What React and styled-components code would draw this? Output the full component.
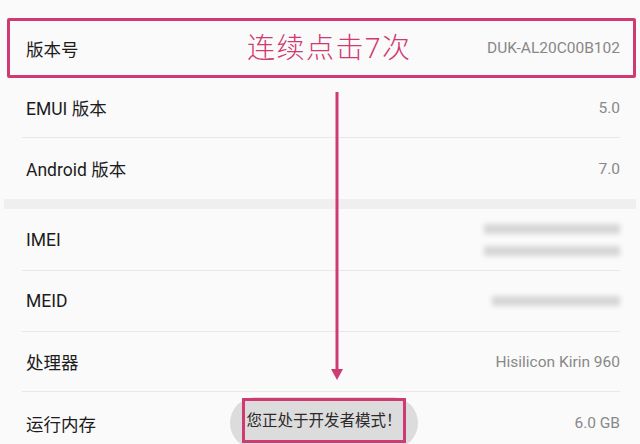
import React from 'react';
import styled, { createGlobalStyle } from 'styled-components';

const GlobalStyle = createGlobalStyle`
  html, body {
    margin: 0;
    padding: 0;
    background: #fafafa;
    font-family: Roboto, "Noto Sans CJK SC", sans-serif;
  }
  *, *:before, *:after {
    box-sizing: border-box;
  }
`

const pink = '#cf3a72'

const Screen = styled.div`
  position: relative;
  width: 640px;
  height: 444px;
  overflow: hidden;
  background: #fafafa;
  padding-top: 18px;
`

const Section = styled.div`
  display: flex;
  flex-direction: column;
`

const SectionGap = styled.div`
  height: 10px;
  background: #efefef;
  margin: 0 4px;
`

const HighlightRow = styled.div`
  position: relative;
  display: flex;
  align-items: center;
  justify-content: space-between;
  height: 60px;
  margin: 0 4px 0 7px;
  padding: 0 13px 0 16px;
  border: 3px solid ${pink};
  border-radius: 2px;
`

const Row = styled.div`
  display: flex;
  align-items: center;
  justify-content: space-between;
  height: ${p => p.$h || 61}px;
  margin: 0 20px 0 22px;
  padding-left: 4px;
  border-bottom: ${p => (p.$last ? 'none' : '1px solid #e8e8e8')};
`

const Label = styled.span`
  font-size: 17.5px;
  color: #1c1c1c;
`

const Value = styled.span`
  font-size: 15.5px;
  color: #888888;
`

const Hint = styled.span`
  position: absolute;
  left: 237px;
  top: 50%;
  transform: translateY(-54%);
  font-size: 28px;
  font-weight: 300;
  color: ${pink};
  letter-spacing: 1.5px;
`

const Blurred = styled.div`
  display: flex;
  flex-direction: column;
  align-items: flex-end;
  gap: 12px;
`

const BlurBar = styled.div`
  width: ${p => p.$w}px;
  height: 10px;
  background: #d6d6d6;
  filter: blur(2.5px);
`

const Arrow = styled.svg`
  position: absolute;
  left: 330px;
  top: 92px;
`

const Toast = styled.div`
  position: absolute;
  left: 230px;
  top: 397px;
  width: 188px;
  height: 52px;
  border-radius: 26px;
  background: #dcdcdc;
  display: flex;
  justify-content: center;
`

const ToastFrame = styled.div`
  display: flex;
  align-items: center;
  justify-content: center;
  width: 164px;
  height: 45px;
  margin-top: 1px;
  padding-bottom: 4px;
  border: 3px solid ${pink};
  font-size: 15.5px;
  color: #2a2a2a;
  background: #dcdcdc;
`

const App = () => (
  <Screen>
    <GlobalStyle />
    <Section>
      <HighlightRow>
        <Label>版本号</Label>
        <Hint>连续点击7次</Hint>
        <Value>DUK-AL20C00B102</Value>
      </HighlightRow>
      <Row $h={60}>
        <Label>EMUI 版本</Label>
        <Value>5.0</Value>
      </Row>
      <Row $last>
        <Label>Android 版本</Label>
        <Value>7.0</Value>
      </Row>
    </Section>
    <SectionGap />
    <Section>
      <Row $h={62}>
        <Label>IMEI</Label>
        <Blurred>
          <BlurBar $w={136} />
          <BlurBar $w={136} />
        </Blurred>
      </Row>
      <Row $h={61}>
        <Label>MEID</Label>
        <Blurred>
          <BlurBar $w={128} />
        </Blurred>
      </Row>
      <Row $h={60}>
        <Label>处理器</Label>
        <Value>Hisilicon Kirin 960</Value>
      </Row>
      <Row $h={62} $last>
        <Label>运行内存</Label>
        <Value>6.0 GB</Value>
      </Row>
    </Section>
    <Arrow width="14" height="290" viewBox="0 0 14 290">
      <line x1="7" y1="0" x2="7" y2="280" stroke={pink} strokeWidth="3" />
      <path d="M1 277 L7 288 L13 277 Z" fill={pink} />
    </Arrow>
    <Toast>
      <ToastFrame>您正处于开发者模式！</ToastFrame>
    </Toast>
  </Screen>
)

export { App as default };
